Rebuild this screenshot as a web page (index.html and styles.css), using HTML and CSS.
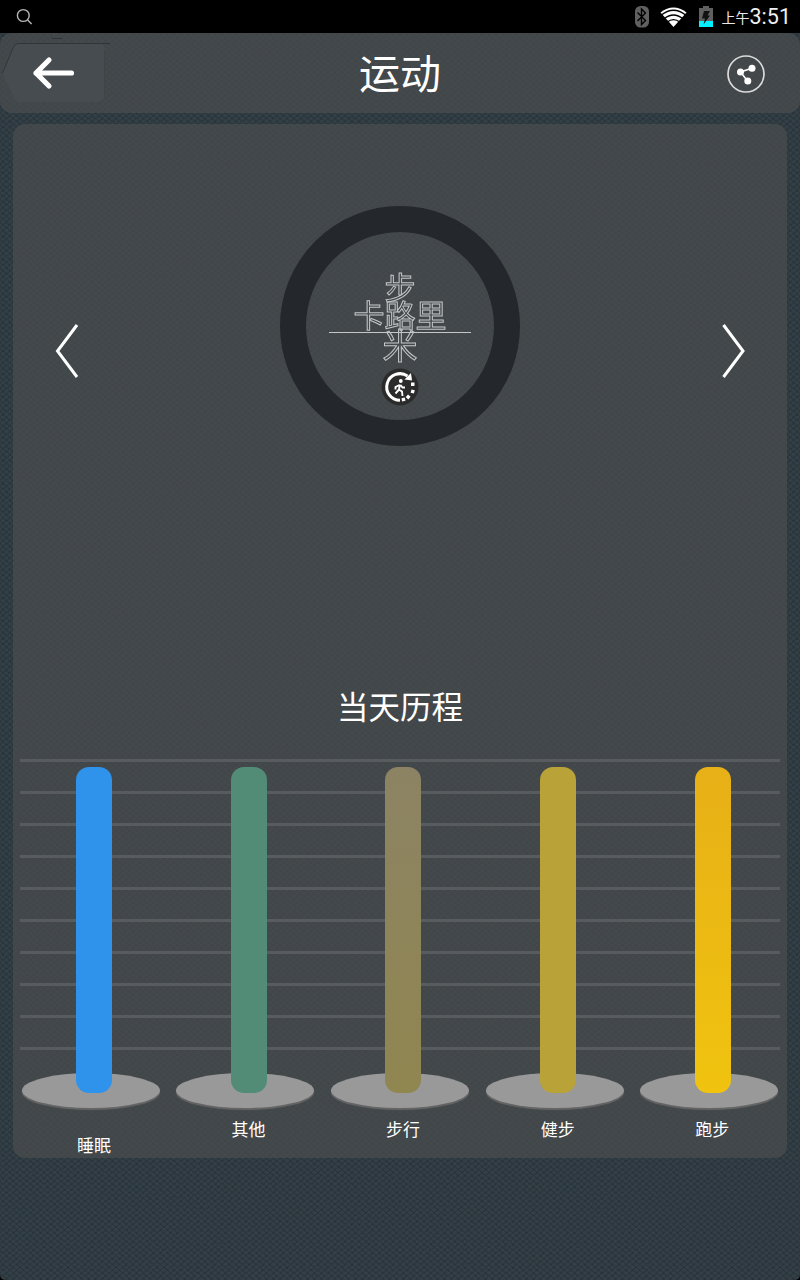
FILE: index.html
```html
<!DOCTYPE html>
<html lang="zh-CN">
<head>
  <meta charset="UTF-8">
  <title>运动</title>
  <link rel="stylesheet" href="styles.css">
</head>
<body>

<div class="status-bar">
  <svg class="search" width="18" height="18" viewBox="0 0 18 18" fill="none" stroke="#b5b5b5" stroke-width="1.4">
    <circle cx="7.3" cy="7.5" r="5.9"/>
    <path d="M11.6 12l4 4"/>
  </svg>
  <div class="status-icons">
    <svg width="14" height="22" viewBox="0 0 14 22">
      <rect width="14" height="21.5" rx="5.5" fill="#606060"/>
      <path d="M2.500 6.500l8 8-4 4V3l4 4-8 8" fill="none" stroke="#000" stroke-width="1.400"/>
    </svg>
    <svg class="wifi" width="27" height="20" viewBox="0 0 27 20">
      <path d="M0.500 5.500Q13.500-4.500 26.500 5.500L13.500 20z" fill="#fff"/>
      <path d="M1 8.200Q13.500-1.700 26 8.200M4 12Q13.500 4.100 23 12M7 15.200Q13.500 10.100 20 15.200" fill="none" stroke="#000" stroke-width="1.400"/>
    </svg>
    <svg class="battery" width="14" height="22" viewBox="0 0 14 22">
      <path d="M4 0h6v2h4v19H0V2h4z" fill="#606060"/>
      <path d="M0 15h14v6H0z" fill="#00f0ff"/>
      <path d="M5 5h6L8.500 9.500H11L4.500 18.500l1.500-6H3z" fill="#101214"/>
    </svg>
    <span class="ampm">上午</span><span class="clock">3:51</span>
  </div>
</div>

<div class="header">
  <div class="back">
    <svg width="106" height="66" viewBox="0 0 106 66">
      <path d="M18 7h80q7 0 7 7v47q0 5-5 5H20q-4 0-6-4L2.500 38q-1-2 0-4L13 11q2-4 5-4z" fill="#474c50"/>
      <path d="M51 1.500l2 1h9M2.500 37L13 12q2-4.500 5-4.500h92" fill="none" stroke="#303538"/>
      <path d="M104.500 14v47q0 4.500-5 4.500" fill="none" stroke="#3e4447"/>
      <path d="M49 24L36 37l13 13M36 37h35.500" fill="none" stroke="#fff" stroke-width="5.200" stroke-linecap="round" stroke-linejoin="round"/>
    </svg>
  </div>
  <h1>运动</h1>
  <svg class="share" width="38" height="38" viewBox="0 0 38 38">
    <circle cx="19" cy="19" r="18" fill="none" stroke="#dcdcdc" stroke-width="1.700"/>
    <path d="M25 13.300L13.500 17l7.200 9.200" fill="none" stroke="#fff" stroke-width="1.600"/>
    <g fill="#fff">
      <circle cx="25" cy="13.300" r="3.500"/>
      <circle cx="13.500" cy="17" r="3.500"/>
      <circle cx="20.800" cy="26" r="3.500"/>
    </g>
  </svg>
</div>

<div class="panel">
  <div class="day">
    <svg class="nav" width="24" height="56" viewBox="0 0 24 56">
      <path d="M22 2L2.500 28 22 54"/>
    </svg>
    <div class="ring">
      <div class="steps">步</div>
      <div class="calories">卡路里</div>
      <div class="divider"></div>
      <div class="meters">米</div>
      <svg class="walk" width="38" height="38" viewBox="0 0 38 38">
        <circle cx="19" cy="19" r="18.500" fill="#2b2b2c"/>
        <path d="M19 32.300A13.300 13.300 0 1 1 26.500 8" fill="none" stroke="#fff" stroke-width="3"/>
        <path d="M23.500 11.500l7.500 1-1-7.500z" fill="#fff"/>
        <g fill="#fff">
          <path d="M30 14.500h3.500v3.500H30z"/>
          <path d="M30.500 21.500l3.300.8-.9 3.300-3.300-.9z"/>
          <path d="M27 26.500l2.600 2.300-2.300 2.600-2.600-2.300z"/>
          <path d="M20.500 30.300l3.300-.7.700 3.200-3.500.8z"/>
        </g>
        <circle cx="19.800" cy="13" r="1.900" fill="#fff"/>
        <path d="M18.800 16.500L18 21.500l3 2 .5 4.500M18 21.500L14.500 25.500M18.500 17l-4 2v2.500M19.500 17l2 2.500h2.500" fill="none" stroke="#fff" stroke-width="1.900"/>
      </svg>
    </div>
    <svg class="nav" width="24" height="56" viewBox="0 0 24 56">
      <path d="M2.500 2L22 28 2.500 54"/>
    </svg>
  </div>

  <h2>当天历程</h2>

  <div class="chart">
    <div class="col sleep">
      <div class="base"></div>
      <div class="bar"></div>
      <span>睡眠</span>
    </div>
    <div class="col other">
      <div class="base"></div>
      <div class="bar"></div>
      <span>其他</span>
    </div>
    <div class="col walking">
      <div class="base"></div>
      <div class="bar"></div>
      <span>步行</span>
    </div>
    <div class="col fitness">
      <div class="base"></div>
      <div class="bar"></div>
      <span>健步</span>
    </div>
    <div class="col running">
      <div class="base"></div>
      <div class="bar"></div>
      <span>跑步</span>
    </div>
  </div>
</div>

</body>
</html>
```

FILE: styles.css
```css
* {
  box-sizing: border-box;
}

html {
  background: #000;
}

body {
  margin: 0;
  height: 1280px;
  overflow: hidden;
  border-radius: 0 0 5px 5px;
  font-family: Roboto, "Noto Sans CJK SC", sans-serif;
  color: #fff;
  /* small diamond weave */
  background-color: #334047;
  background-image:
    repeating-linear-gradient(40deg, rgba(0,0,0,0.16) 0, transparent 2.2px 4.4px),
    repeating-linear-gradient(-40deg, rgba(0,0,0,0.16) 0, transparent 2.2px 4.4px);
}

svg {
  display: block;
  flex: none;
}

.status-bar {
  height: 33px;
  background: #000;
  display: flex;
  justify-content: space-between;
  padding: 0 10px 0 16px;
}

.search {
  margin-top: 8px;
}

.status-icons {
  display: flex;
  align-items: flex-start;
  padding-top: 6px;
}

.wifi {
  margin: 1px 0 0 11px;
}

.battery {
  margin: 0 9px 0 12px;
}

.ampm {
  font-size: 14px;
  line-height: 24px;
  color: #e8e8e8;
}

.clock {
  font-size: 21.5px;
  line-height: 22px;
  margin-right: -1px;
  color: #f0f0f0;
}

.header {
  height: 80px;
  border-radius: 12px;
  background: rgba(74, 76, 77, 0.75);
  display: grid;
  grid-template-columns: 120px 1fr 120px;
}

.back {
  padding-top: 3px;
}

.back svg {
  overflow: visible;
}

h1 {
  margin: 0;
  font-size: 41px;
  font-weight: 400;
  line-height: 85px;
  text-align: center;
}

.share {
  margin: 22px 0 0 47px;
}

.panel {
  margin: 11px 13px 0;
  height: 1034px;
  border-radius: 12px;
  background: rgba(74, 76, 77, 0.75);
}

.day {
  height: 567px;
  padding: 82px 42px 0;
  display: flex;
  justify-content: space-between;
}

.nav {
  margin-top: 117px;
  fill: none;
  stroke: #fff;
  stroke-width: 3;
}

.ring {
  width: 240px;
  height: 240px;
  border: 26.5px solid #24272b;
  border-radius: 50%;
  padding-top: 42px;
  display: flex;
  flex-direction: column;
  align-items: center;
  color: transparent;
  -webkit-text-stroke: 1px #c4c6c7;
  will-change: transform;
}

.steps, .calories {
  font-size: 31px;
  line-height: 29px;
}

.calories {
  line-height: 28px;
}

.divider {
  width: 142px;
  height: 1px;
  background: #c4c6c7;
  margin-top: 1px;
}

.meters {
  font-size: 35px;
  line-height: 29px;
}

.walk {
  margin-top: 6px;
}

h2 {
  margin: 0;
  font-size: 31.5px;
  font-weight: 400;
  line-height: 35px;
  text-align: center;
}

.chart {
  height: 432px;
  padding: 41px 1px 0 0;
  display: flex;
  background: repeating-linear-gradient(#585c5f 0 3px, transparent 3px 32px) 7px 33px / 760px 292px no-repeat;
}

.col {
  flex: 1;
  display: flex;
  flex-direction: column;
  align-items: center;
  position: relative;
}

.base {
  position: absolute;
  top: 306px;
  left: 8.9px;
  width: 138px;
  height: 35px;
  border-radius: 50%;
  background: #999;
  box-shadow: 0 2px 1px #666;
}

.bar {
  position: relative;
  left: 4px;
  width: 36px;
  height: 326px;
  flex: none;
  border-radius: 13px;
}

.col span {
  position: relative;
  left: 3.6px;
  margin-top: 25px;
  font-size: 17px;
  line-height: 25px;
}

.sleep span {
  margin-top: 41px;
}

.sleep .bar { background: #2f93eb; }
.other .bar { background: #528b76; }
.walking .bar { background: linear-gradient(#8c8364, #908650); }
.fitness .bar { background: #b9a238; }
.running .bar { background: linear-gradient(#e7b017, #f0c30f); }
```
